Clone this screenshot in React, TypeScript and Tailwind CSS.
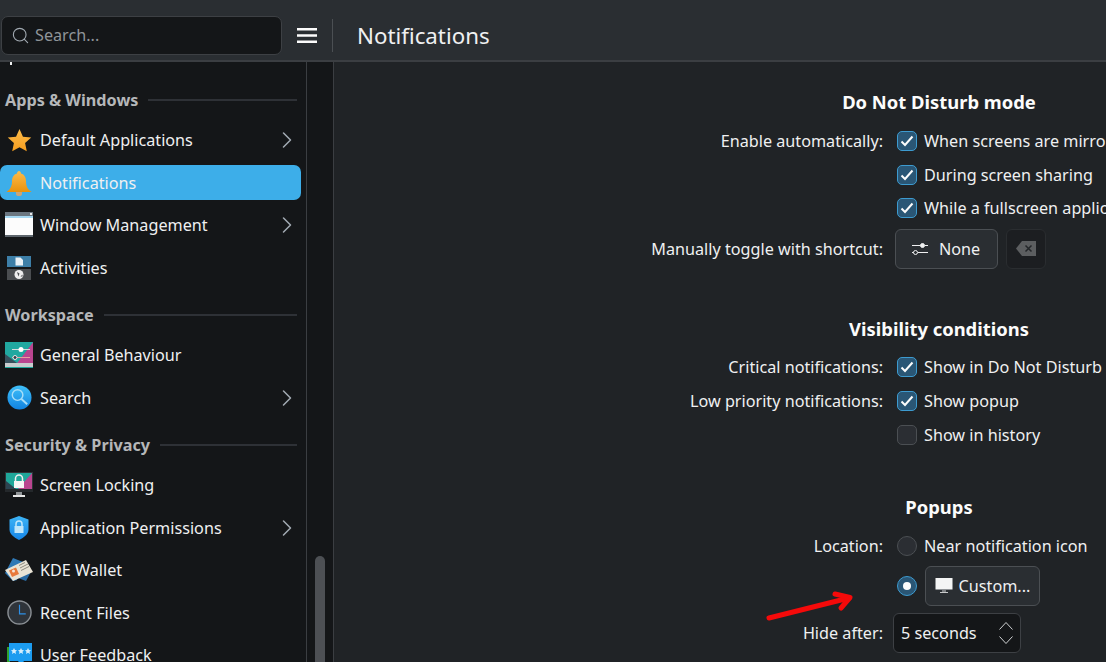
import type { ReactNode } from 'react';
import { Search, ChevronRight } from 'lucide-react';

const StarIcon = () => (
  <svg width="25" height="25" viewBox="0 0 26 26">
    <defs>
      <linearGradient id="star" x1="0" y1="0" x2="0" y2="1">
        <stop offset="0" stopColor="#fdbc4b" />
        <stop offset="1" stopColor="#f59d1e" />
      </linearGradient>
    </defs>
    <path d="M13 1l3.600 8 8.600.9-6.400 5.800 1.800 8.500L13 19.900l-7.600 4.300 1.800-8.500L.8 9.900 9.400 9z" fill="url(#star)" />
  </svg>
);

const BellIcon = () => (
  <svg width="26" height="26" viewBox="0 0 26 26">
    <defs>
      <linearGradient id="bell" x1="0" y1="0" x2="0" y2="1">
        <stop offset="0" stopColor="#fdbc4b" />
        <stop offset="1" stopColor="#e8920c" />
      </linearGradient>
    </defs>
    <path d="M10 22h6v2a3 2 0 01-6 0z" fill="#c9a57a" />
    <path d="M11 3.500C11 2 12 1 13 1s2 1 2 2.500c3.500 1 5 4 5 8 0 5 2 8 5.500 10.500H.5C4 19.500 6 16.500 6 11.500c0-4 1.500-7 5-8z" fill="url(#bell)" />
  </svg>
);

const WindowIcon = () => (
  <svg width="28" height="26" viewBox="0 0 28 26">
    <rect x="0" y="0" width="28" height="4" fill="#6b7680" />
    <rect x="25" y="1" width="2" height="2" fill="#e6e6e6" />
    <rect x="0" y="4" width="28" height="2" fill="#a6d8f2" />
    <rect x="0" y="6" width="28" height="17" fill="#fcfcfc" />
    <rect x="0" y="23" width="28" height="2" fill="#5d656c" />
  </svg>
);

const ActivitiesIcon = () => (
  <svg width="24" height="24" viewBox="0 0 24 24">
    <rect x="0" y="0" width="24" height="11" fill="#3d7fa8" />
    <rect x="0" y="13" width="24" height="11" fill="#4a4d50" />
    <path d="M8.500 1.500h5l2.500 2.500v5.500H8.500z" fill="#eaf2f7" />
    <circle cx="12" cy="18.500" r="4.500" fill="#eeeeee" />
    <path d="M10 16l2.500 1.500-1 3zM13.500 20.500l2-2v2z" fill="#4a4d50" />
  </svg>
);

const BehaviourIcon = () => (
  <svg width="28" height="26" viewBox="0 0 28 26">
    <rect x="0" y="0" width="28" height="26" fill="#1fa79a" />
    <path d="M28 0v21H12z" fill="#b9458f" />
    <path d="M0 0h28L12 21H0z" fill="#21a8a0" />
    <path d="M0 12l12 9H0z" fill="#37505c" />
    <rect x="0" y="21" width="28" height="4" fill="#c8ccce" />
    <rect x="7" y="7" width="18" height="1" fill="#d7dbdd" />
    <circle cx="16" cy="7.500" r="2.500" fill="#fff" />
    <rect x="7" y="15" width="18" height="1" fill="#e8a0a0" />
    <circle cx="10" cy="15.500" r="2" fill="#33404a" stroke="#e8e8e8" />
  </svg>
);

const SearchAppIcon = () => (
  <svg width="25" height="25" viewBox="0 0 26 26">
    <defs>
      <linearGradient id="sa" x1="0" y1="0" x2="0" y2="1">
        <stop offset="0" stopColor="#3fc0fa" />
        <stop offset="1" stopColor="#1183e0" />
      </linearGradient>
    </defs>
    <circle cx="13" cy="13" r="12.500" fill="url(#sa)" />
    <circle cx="11" cy="10.500" r="5.500" fill="none" stroke="#a8def8" strokeWidth="1.500" />
    <path d="M15 14.500l6 5.500" stroke="#a8def8" strokeWidth="2" />
  </svg>
);

const LockScreenIcon = () => (
  <svg width="28" height="26" viewBox="0 0 28 26">
    <rect x="0" y="0" width="28" height="19" fill="#2f3438" />
    <path d="M1 1h26v16H1z" fill="#1fa79a" />
    <path d="M27 1v16H13z" fill="#b9458f" />
    <path d="M1 9l10 8H1z" fill="#2c4552" />
    <rect x="0" y="17" width="28" height="3" fill="#24282b" />
    <rect x="11" y="20" width="6" height="3" fill="#8f9396" />
    <rect x="8" y="23" width="12" height="2" fill="#e5e5e5" />
    <path d="M10.500 9V6.500a3.500 3.500 0 017 0V9" fill="none" stroke="#eeeeee" strokeWidth="1.500" />
    <rect x="9" y="9" width="10" height="7" fill="#f5f5f5" />
  </svg>
);

const ShieldIcon = () => (
  <svg width="20" height="24" viewBox="0 0 20 24">
    <defs>
      <linearGradient id="sh" x1="0" y1="0" x2="0" y2="1">
        <stop offset="0" stopColor="#3db4f5" />
        <stop offset="1" stopColor="#1585e8" />
      </linearGradient>
    </defs>
    <path d="M10 0l9.500 3.500v10C19.500 18 15 21.500 10 24 5 21.500.5 18 .5 13.500v-10z" fill="url(#sh)" />
    <path d="M7 10V8a3 3 0 016 0v2" fill="none" stroke="#bfe6fa" strokeWidth="1.500" />
    <rect x="5.500" y="10" width="9" height="7" fill="#bfe6fa" />
  </svg>
);

const WalletIcon = () => (
  <svg width="28" height="26" viewBox="0 0 28 26">
    <path d="M8 1l10 4-6 18-4 1-8-8z" fill="#2f78b5" />
    <path d="M14 15l13-2-6 11-8-3z" fill="#2a6aa3" />
    <path d="M0 13L21 3l7 12-20 9z" fill="#e9e3d5" />
    <path d="M4 13.500l7-3 3 6.500-7 3z" fill="#e8793a" />
    <circle cx="8.500" cy="14" r="1.500" fill="#f7e4d6" />
    <path d="M14 8.500l6-3M15 11l8-4M16 13.500l8-4" stroke="#8f8b80" strokeWidth="1" />
  </svg>
);

const ClockIcon = () => (
  <svg width="25" height="25" viewBox="0 0 26 26">
    <circle cx="13" cy="13" r="12" fill="#2f343a" stroke="#8a8f94" strokeWidth="1.500" />
    <path d="M13 5v9.500h6.500" fill="none" stroke="#2d8fe6" strokeWidth="1.200" />
  </svg>
);

const FeedbackIcon = () => (
  <svg width="26" height="26" viewBox="0 0 26 26">
    <path d="M1 5h3v16h8v3H1z" fill="#2fa02c" />
    <rect x="3" y="1" width="23" height="18" fill="#1c9cf0" />
    <path d="M12 19h6l-3 4z" fill="#1c9cf0" />
    <path d="M8 6l1 2 2 .2-1.500 1.500.5 2.300-2-1.200-2 1.200.5-2.300L5 8.200 7 8zM15 6l1 2 2 .2-1.500 1.500.5 2.300-2-1.200-2 1.200.5-2.300L12 8.200 14 8zM22 6l1 2 2 .2-1.500 1.500.5 2.300-2-1.200-2 1.200.5-2.300L19 8.200 21 8z" fill="#d6eefc" />
  </svg>
);

const ShortcutIcon = () => (
  <svg width="16" height="14" viewBox="0 0 16 14" fill="none" stroke="#eff0f1">
    <path d="M0 3.500h8.500M13 3.500h3" />
    <circle cx="10.500" cy="3.500" r="2" fill="#eff0f1" />
    <path d="M0 10.500h1.500M6 10.500h10" />
    <circle cx="3.500" cy="10.500" r="2" />
  </svg>
);

const ClearIcon = () => (
  <svg width="20" height="15" viewBox="0 0 20 15">
    <path d="M6 0h14v15H6L0 7.500z" fill="#5c5e60" />
    <path d="M9.500 4.500l6 6M15.500 4.500l-6 6" stroke="#232629" strokeWidth="1.500" />
  </svg>
);

const MonitorIcon = () => (
  <svg width="18" height="16" viewBox="0 0 18 16">
    <rect x="0.500" y="0" width="17" height="11" fill="#f4f5f5" />
    <rect x="0.500" y="11" width="17" height="1" fill="#8f9396" />
    <rect x="7" y="12" width="4" height="2" fill="#7c7f82" />
    <rect x="5" y="14" width="8" height="1" fill="#c7c9ca" />
  </svg>
);

const HamburgerIcon = () => (
  <svg width="20" height="15" viewBox="0 0 20 15" fill="#fcfcfc">
    <rect x="0" y="0" width="20" height="2.500" />
    <rect x="0" y="6.250" width="20" height="2.500" />
    <rect x="0" y="12.500" width="20" height="2.500" />
  </svg>
);

const SpinIcon = () => (
  <svg width="14" height="22" viewBox="0 0 14 22" fill="none" stroke="#cfd1d3" strokeWidth="1">
    <path d="M.5 7.500l6.500-7 6.500 7M.5 14.500l6.500 7 6.500-7" />
  </svg>
);

const Check = ({ on }: { on: boolean }) => (
  <span
    className={`flex h-[20px] w-[20px] shrink-0 items-center justify-center rounded-[5px] border ${
      on ? 'border-[#3d9bd0] bg-[#2a5675]' : 'border-[#4b4f53] bg-[#2b2e33]'
    }`}
  >
    {on && (
      <svg width="14" height="12" viewBox="0 0 14 12" fill="none" stroke="#fcfcfc" strokeWidth="2">
        <path d="M1.500 6.500l3.500 3.500 7.500-8.500" />
      </svg>
    )}
  </span>
);

const Radio = ({ on }: { on: boolean }) => (
  <span
    className={`flex h-[20px] w-[20px] shrink-0 items-center justify-center rounded-full border ${
      on ? 'border-[#3d9bd0] bg-[#2a5675]' : 'border-[#4b4f53] bg-[#2b2e33]'
    }`}
  >
    {on && <span className="h-[8px] w-[8px] rounded-full bg-[#fcfcfc]" />}
  </span>
);

function NavItem({ icon, label, arrow, active }: { icon: ReactNode; label: string; arrow?: boolean; active?: boolean }) {
  return (
    <div className={`flex h-[35px] items-center rounded-[7px] ${active ? 'bg-[#3daee9]' : ''}`}>
      <div className="flex w-[40px] shrink-0 items-center justify-center pr-[2px]">{icon}</div>
      <span className="flex-1 text-[#eff0f1]">{label}</span>
      {arrow && <ChevronRight size={28} strokeWidth={1.3} className="text-[#a1a9b1]" />}
    </div>
  );
}

function SectionHeading({ title, className }: { title: string; className: string }) {
  return (
    <div className={`flex h-[22px] items-center gap-[10px] pr-[4px] pl-[5px] ${className}`}>
      <span className="font-bold text-[#b5b7b9]">{title}</span>
      <span className="h-[2px] flex-1 bg-[#2e3136]" />
    </div>
  );
}

function FormRow({ label, children, className }: { label?: string; children: ReactNode; className: string }) {
  return (
    <div className={`flex items-center ${className}`}>
      <div className="w-[549px] shrink-0 text-right text-[#eff0f1]">{label}</div>
      <div className="ml-[14px] flex items-center gap-[7px] whitespace-nowrap text-[#eff0f1]">{children}</div>
    </div>
  );
}

function GroupTitle({ title, className }: { title: string; className: string }) {
  return <h2 className={`w-[1210px] text-center text-[18.4px] leading-[24px] font-bold text-[#fcfcfc] ${className}`}>{title}</h2>;
}

export default function App() {
  return (
    <div className="relative flex h-[662px] w-[1106px] flex-col overflow-hidden bg-[#202326] text-[16.2px] leading-[22px] [font-family:'Noto_Sans',sans-serif]">
      {/* Header */}
      <header className="flex h-[62px] shrink-0 items-center border-b-2 border-[#3b3e42] bg-[#2a2e32] pt-[10px]">
        <div className="ml-[1px] flex h-[39px] w-[281px] items-center rounded-[7px] border border-[#3d4044] bg-[#141618] pl-[9px] text-[#8f9499]">
          <Search size={19} strokeWidth={1.4} className="text-[#a1a9b1]" />
          <span className="ml-[5px]">Search...</span>
        </div>
        <div className="ml-[15px] flex items-center">
          <HamburgerIcon />
        </div>
        <div className="ml-[15px] h-[33px] w-px bg-[#4b4f53]" />
        <h1 className="mt-[2px] ml-[24px] text-[22.3px] font-normal text-[#eff0f1]">Notifications</h1>
      </header>

      <div className="flex min-h-0 flex-1">
        {/* Sidebar */}
        <aside className="w-[307px] shrink-0 overflow-hidden border-r border-[#3b3e42] bg-[#141618] pr-[5px]">
          <div className="ml-[10px] h-[3px] w-[2px] bg-[#eff0f1]" />
          <SectionHeading title="Apps & Windows" className="mt-[24px]" />
          <div className="mt-[11.500px] flex flex-col gap-[7.500px]">
            <NavItem icon={<StarIcon />} label="Default Applications" arrow />
            <NavItem icon={<BellIcon />} label="Notifications" active />
            <NavItem icon={<WindowIcon />} label="Window Management" arrow />
            <NavItem icon={<ActivitiesIcon />} label="Activities" />
          </div>
          <SectionHeading title="Workspace" className="mt-[18.500px]" />
          <div className="mt-[12px] flex flex-col gap-[7.500px]">
            <NavItem icon={<BehaviourIcon />} label="General Behaviour" />
            <NavItem icon={<SearchAppIcon />} label="Search" arrow />
          </div>
          <SectionHeading title="Security & Privacy" className="mt-[19px]" />
          <div className="mt-[11.500px] flex flex-col gap-[7.500px]">
            <NavItem icon={<LockScreenIcon />} label="Screen Locking" />
            <NavItem icon={<ShieldIcon />} label="Application Permissions" arrow />
            <NavItem icon={<WalletIcon />} label="KDE Wallet" />
            <NavItem icon={<ClockIcon />} label="Recent Files" />
            <NavItem icon={<FeedbackIcon />} label="User Feedback" />
          </div>
        </aside>

        {/* Scrollbar */}
        <div className="w-[27px] shrink-0 border-r border-[#3b3e42] bg-[#141618] pt-[494px] pl-[8px]">
          <div className="h-[120px] w-[10px] rounded-full bg-[#4d5054]" />
        </div>

        {/* Form */}
        <main className="min-w-0 flex-1 overflow-hidden">
          <GroupTitle title="Do Not Disturb mode" className="mt-[28px]" />
          <FormRow label="Enable automatically:" className="mt-[15px] h-[24px]">
            <Check on />
            <span>When screens are mirrored</span>
          </FormRow>
          <FormRow className="mt-[9.500px] h-[24px]">
            <Check on />
            <span>During screen sharing</span>
          </FormRow>
          <FormRow className="mt-[9.500px] h-[24px]">
            <Check on />
            <span>While a fullscreen application is focused</span>
          </FormRow>
          <FormRow label="Manually toggle with shortcut:" className="mt-[8.500px] h-[40px]">
            <span className="-ml-[2px] flex h-[40px] w-[103px] items-center justify-center gap-[11px] rounded-[6px] border border-[#4b4f53] bg-[#2a2e32] pr-[1px]">
              <ShortcutIcon />
              <span className="pt-[1px]">None</span>
            </span>
            <span className="ml-[1px] flex h-[40px] w-[40px] items-center justify-center rounded-[6px] border border-[#2a2d30] bg-[#1c1e21]">
              <ClearIcon />
            </span>
          </FormRow>

          <GroupTitle title="Visibility conditions" className="mt-[48px]" />
          <FormRow label="Critical notifications:" className="mt-[14px] h-[24px]">
            <Check on />
            <span>Show in Do Not Disturb mode</span>
          </FormRow>
          <FormRow label="Low priority notifications:" className="mt-[10px] h-[24px]">
            <Check on />
            <span>Show popup</span>
          </FormRow>
          <FormRow className="mt-[10px] h-[24px]">
            <Check on={false} />
            <span>Show in history</span>
          </FormRow>

          <GroupTitle title="Popups" className="mt-[48px]" />
          <FormRow label="Location:" className="mt-[15px] h-[24px]">
            <Radio on={false} />
            <span>Near notification icon</span>
          </FormRow>
          <FormRow className="mt-[8px] h-[40px]">
            <Radio on />
            <span className="ml-[1px] flex h-[40px] w-[115px] items-center justify-center gap-[6px] rounded-[6px] border border-[#4b4f53] bg-[#2a2e32]">
              <MonitorIcon />
              <span className="pt-[1px]">Custom...</span>
            </span>
          </FormRow>
          <FormRow label="Hide after:" className="mt-[7px] h-[40px]">
            <span className="-ml-[4px] flex h-[40px] w-[128px] items-center justify-between rounded-[6px] border border-[#3d4044] bg-[#141618] pr-[7px] pl-[7px]">
              <span>5 seconds</span>
              <SpinIcon />
            </span>
          </FormRow>
        </main>
      </div>

      {/* Red annotation arrow */}
      <svg className="absolute top-[585px] left-[760px]" width="100" height="42" viewBox="0 0 100 42" fill="none" stroke="#f50a0a" strokeWidth="5" strokeLinecap="round" strokeLinejoin="round">
        <path d="M9 33L89 13" />
        <path d="M75 9L90 12.500L81 23" />
      </svg>
    </div>
  );
}
